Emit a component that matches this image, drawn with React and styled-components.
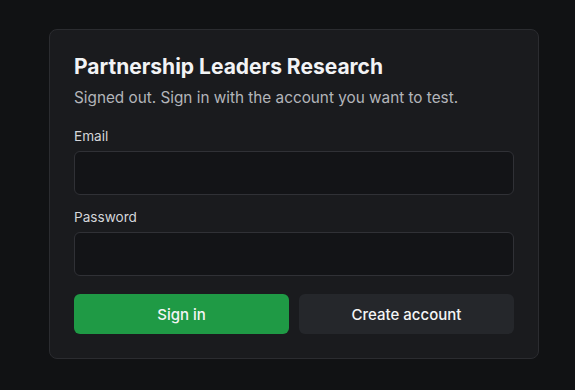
import React from "react";
import styled, { createGlobalStyle } from "styled-components";

const GlobalStyle = createGlobalStyle`
    html, body {
        margin: 0;
        background: #111214;
        font-family: Inter, "Noto Sans", "DejaVu Sans", sans-serif;
        -webkit-font-smoothing: antialiased;
    }
`;

const Page = styled.div`
    min-height: 390px;
    padding: 29px 36px 0 49px;
    box-sizing: border-box;
`;

const Card = styled.form`
    width: 490px;
    box-sizing: border-box;
    background: #1a1b1e;
    border: 1px solid #2b2c30;
    border-radius: 8px;
    padding: 24px;
    display: flex;
    flex-direction: column;
`;

const Title = styled.h1`
    margin: 0;
    font-size: 21px;
    line-height: 26px;
    font-weight: 700;
    color: #f2f3f5;
`;

const Subtitle = styled.p`
    margin: 7px 0 0;
    font-size: 15.3px;
    line-height: 22px;
    color: #b3b5ba;
`;

const Field = styled.label`
    display: flex;
    flex-direction: column;
    gap: 6px;
    margin-top: ${(p) => p.$top}px;
`;

const LabelText = styled.span`
    font-size: 13.6px;
    line-height: 18px;
    color: #d4d6da;
`;

const Input = styled.input`
    height: 44px;
    box-sizing: border-box;
    background: #131417;
    border: 1px solid #303136;
    border-radius: 6px;
    color: #e8e9eb;
    font-size: 15px;
    padding: 0 12px;
    outline: none;
`;

const Actions = styled.div`
    display: grid;
    grid-template-columns: 1fr 1fr;
    gap: 10px;
    margin-top: 18px;
`;

const Button = styled.button`
    height: 40px;
    border: none;
    border-radius: 6px;
    font-family: inherit;
    font-size: 15px;
    font-weight: 500;
    color: #f4f5f6;
    background: ${(p) => (p.$primary ? "#1f9a45" : "#25272b")};
    cursor: pointer;
`;

export default function App() {
    return (
        <>
            <GlobalStyle />
            <Page>
                <Card onSubmit={(e) => e.preventDefault()}>
                    <Title>Partnership Leaders Research</Title>
                    <Subtitle>Signed out. Sign in with the account you want to test.</Subtitle>
                    <Field $top={18}>
                        <LabelText>Email</LabelText>
                        <Input type="email" />
                    </Field>
                    <Field $top={13}>
                        <LabelText>Password</LabelText>
                        <Input type="password" />
                    </Field>
                    <Actions>
                        <Button type="submit" $primary>Sign in</Button>
                        <Button type="button">Create account</Button>
                    </Actions>
                </Card>
            </Page>
        </>
    );
}
